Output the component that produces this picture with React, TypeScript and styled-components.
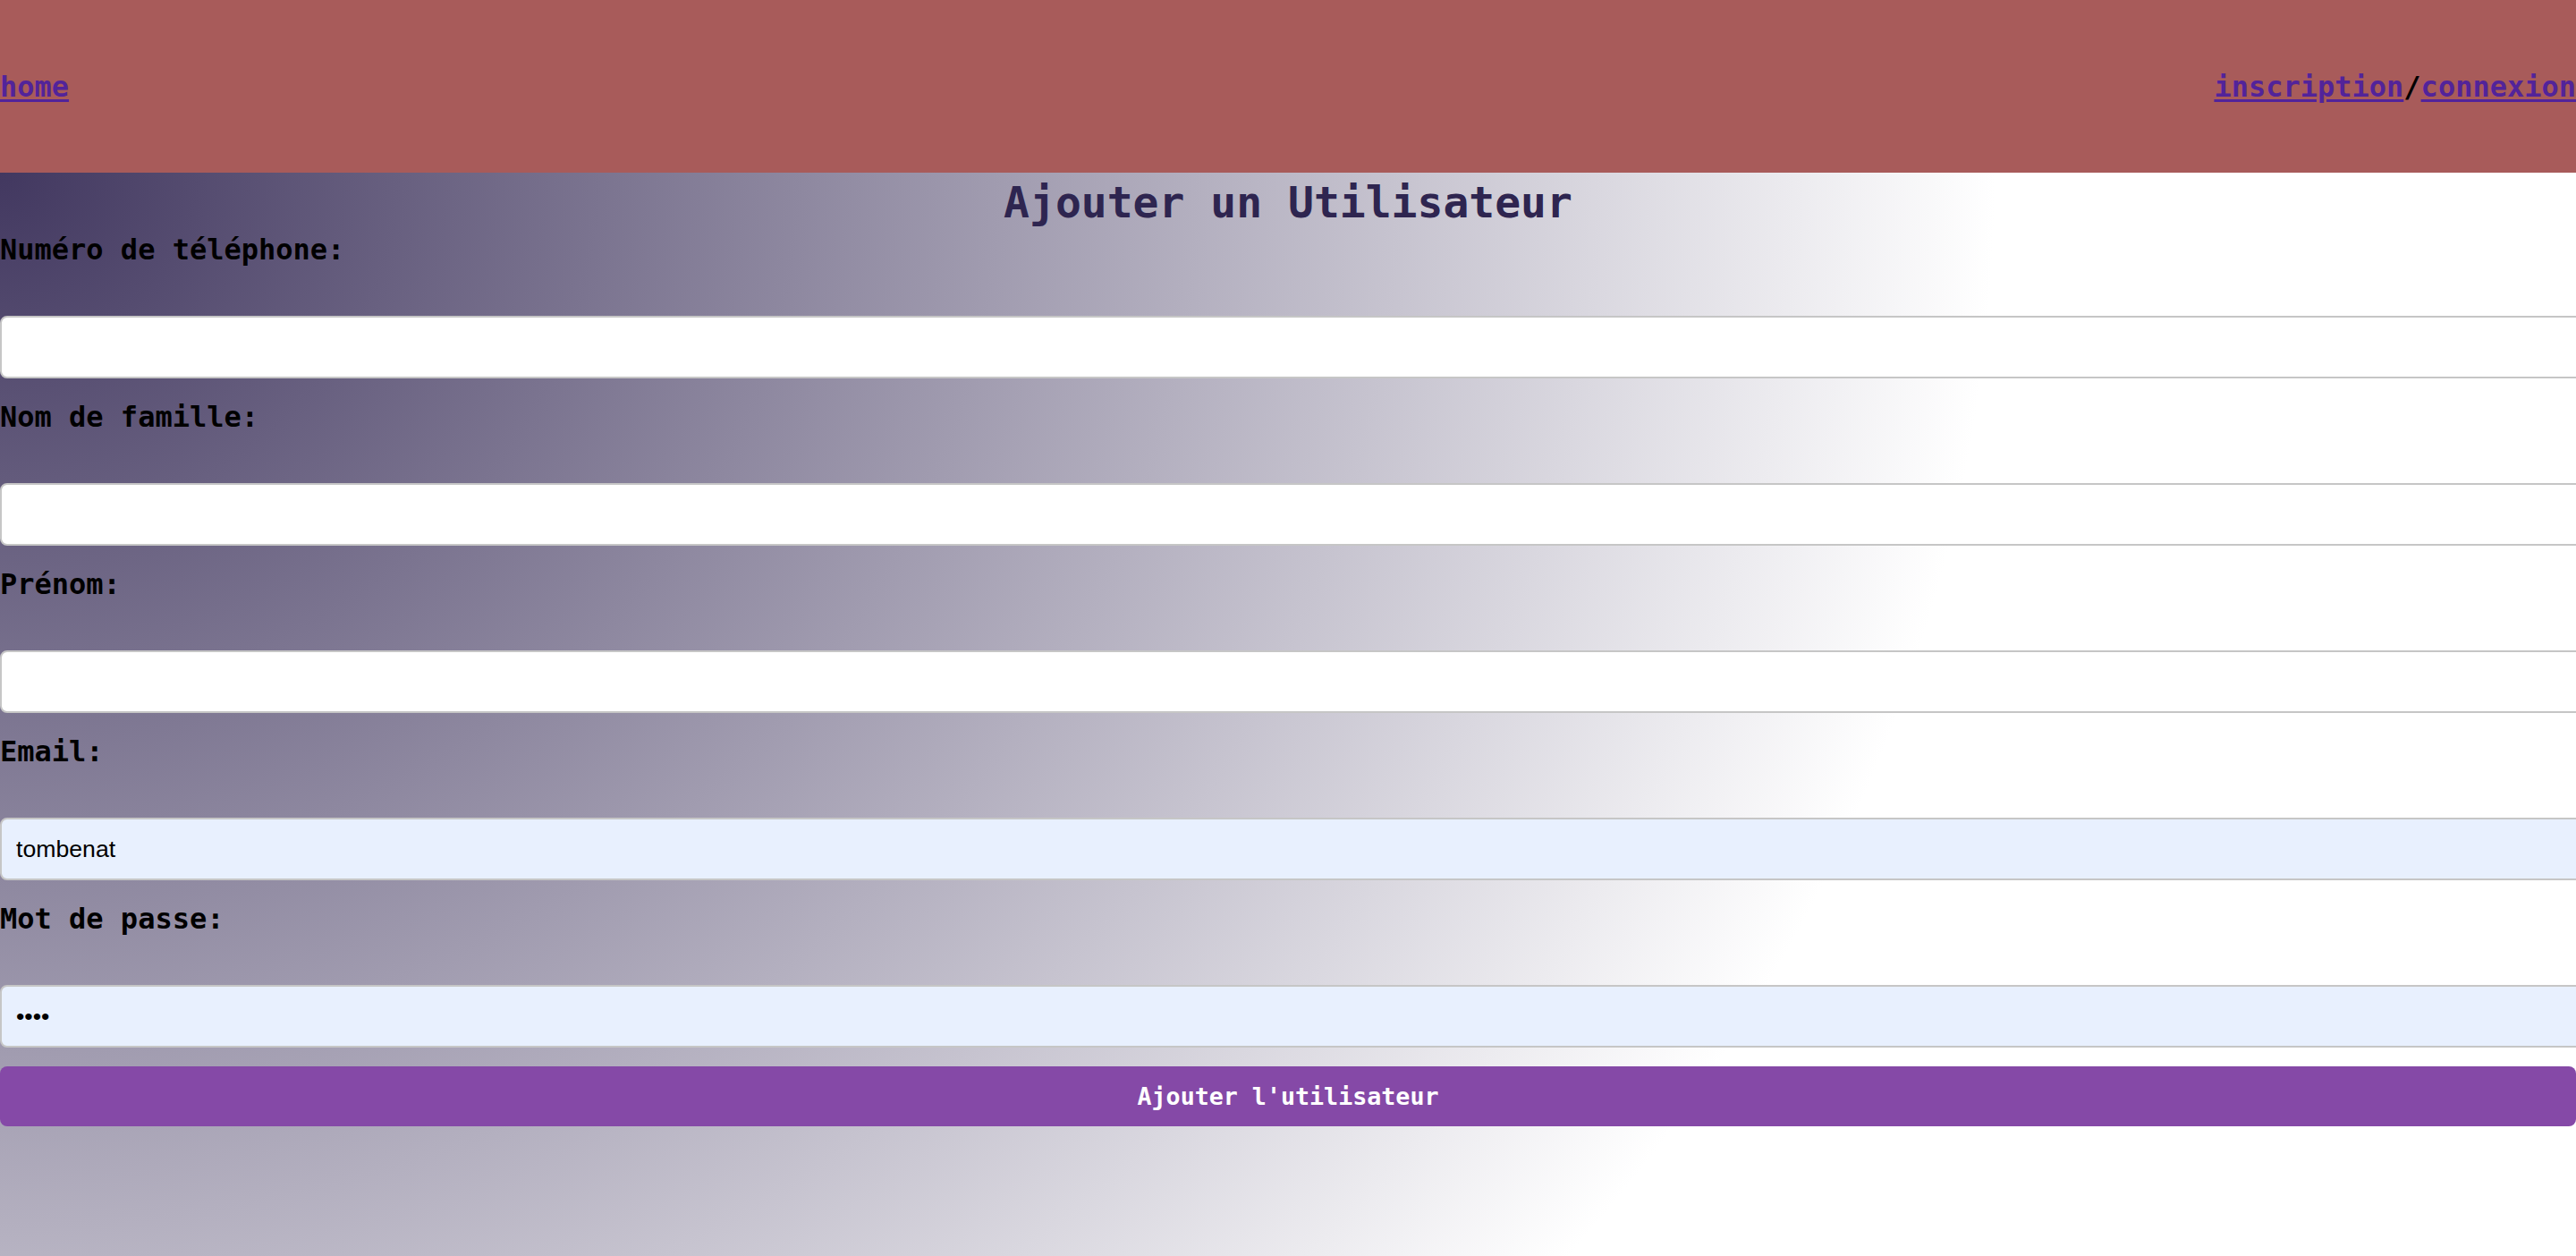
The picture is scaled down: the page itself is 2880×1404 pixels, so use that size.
import styled, { createGlobalStyle } from 'styled-components';

const GlobalStyle = createGlobalStyle`
  html, body {
    margin: 0;
    padding: 0;
  }
  body {
    font-family: "DejaVu Sans Mono", "Liberation Mono", monospace;
    background: #ffffff;
  }
`;

const Header = styled.header`
  height: 193px;
  background-color: #a85b5a;
  display: flex;
  align-items: center;
  justify-content: space-between;
  font-size: 32px;
  font-weight: bold;
`;

const NavLink = styled.a`
  color: #52239a;
  text-decoration: underline;
  text-underline-offset: 3px;
  cursor: pointer;
`;

const AuthLinks = styled.div`
  display: flex;
  color: #000;
`;

const Main = styled.main`
  min-height: calc(100vh - 193px);
  overflow: hidden;
  background: radial-gradient(ellipse 2230px 1960px at 0 0, #423860 0%, #ffffff 100%);
  padding-bottom: 80px;
  box-sizing: border-box;
`;

const Title = styled.h1`
  margin: 0;
  text-align: center;
  font-size: 48px;
  line-height: 67px;
  font-weight: bold;
  color: #2e2550;
`;

const Form = styled.form`
  display: flex;
  flex-direction: column;
`;

const Field = styled.div`
  display: flex;
  flex-direction: column;
  margin-bottom: 24px;
`;

const Label = styled.label`
  font-size: 32px;
  line-height: 38px;
  font-weight: bold;
  color: #000;
  margin-bottom: 55px;
`;

const Input = styled.input<{ $filled?: boolean }>`
  box-sizing: content-box;
  width: 100%;
  height: 66px;
  padding: 0 16px;
  margin: 0;
  border: 2px solid #c6c6c6;
  border-radius: 8px;
  background: ${p => (p.$filled ? '#e8f0fe' : '#ffffff')};
  font-family: "Liberation Sans", Arial, sans-serif;
  font-size: 26.67px;
  color: #000;
  outline: none;
`;

const Submit = styled.button`
  margin-top: -3px;
  height: 67px;
  width: 100%;
  border: none;
  border-radius: 8px;
  background-color: #8549a7;
  color: #fff;
  font-family: "DejaVu Sans Mono", "Liberation Mono", monospace;
  font-size: 26.67px;
  font-weight: bold;
  cursor: pointer;
`;

const fields = [
  { id: 'tel', label: 'Numéro de téléphone:', type: 'tel', value: '' },
  { id: 'nom', label: 'Nom de famille:', type: 'text', value: '' },
  { id: 'prenom', label: 'Prénom:', type: 'text', value: '' },
  { id: 'email', label: 'Email:', type: 'text', value: 'tombenat' },
  { id: 'mdp', label: 'Mot de passe:', type: 'password', value: 'abcd' },
];

export default function App() {
  return (
    <>
      <GlobalStyle />
      <Header>
        <NavLink href="#">home</NavLink>
        <AuthLinks>
          <NavLink href="#">inscription</NavLink>
          <span>/</span>
          <NavLink href="#">connexion</NavLink>
        </AuthLinks>
      </Header>
      <Main>
        <Title>Ajouter un Utilisateur</Title>
        <Form onSubmit={e => e.preventDefault()}>
          {fields.map(f => (
            <Field key={f.id}>
              <Label htmlFor={f.id}>{f.label}</Label>
              <Input id={f.id} type={f.type} defaultValue={f.value} $filled={f.value !== ''} />
            </Field>
          ))}
          <Submit type="submit">Ajouter l'utilisateur</Submit>
        </Form>
      </Main>
    </>
  );
}
